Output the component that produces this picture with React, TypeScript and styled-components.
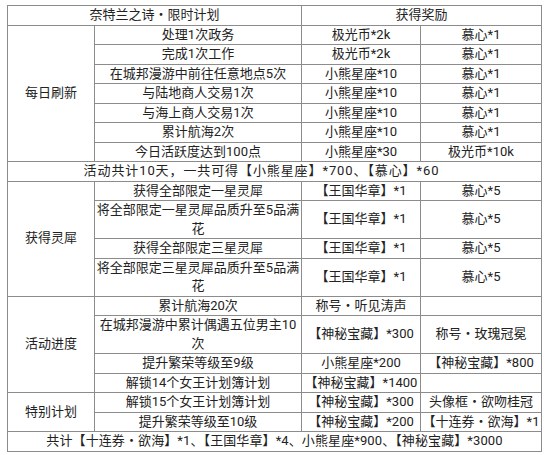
import React from "react";
import styled, { createGlobalStyle } from "styled-components";

const GlobalStyle = createGlobalStyle`
  body {
    margin: 0;
    background: #ffffff;
  }
`;

type Row = {
  task: React.ReactNode;
  a: string;
  b: string;
};

const daily: Row[] = [
  { task: "处理1次政务", a: "极光币*2k", b: "慕心*1" },
  { task: "完成1次工作", a: "极光币*2k", b: "慕心*1" },
  { task: "在城邦漫游中前往任意地点5次", a: "小熊星座*10", b: "慕心*1" },
  { task: "与陆地商人交易1次", a: "小熊星座*10", b: "慕心*1" },
  { task: "与海上商人交易1次", a: "小熊星座*10", b: "慕心*1" },
  { task: "累计航海2次", a: "小熊星座*10", b: "慕心*1" },
  { task: "今日活跃度达到100点", a: "小熊星座*30", b: "极光币*10k" },
];

const lingxi: Row[] = [
  { task: "获得全部限定一星灵犀", a: "【王国华章】*1", b: "慕心*5" },
  {
    task: (
      <>
        将全部限定一星灵犀品质升至5品满
        <br />花
      </>
    ),
    a: "【王国华章】*1",
    b: "慕心*5",
  },
  { task: "获得全部限定三星灵犀", a: "【王国华章】*1", b: "慕心*5" },
  {
    task: (
      <>
        将全部限定三星灵犀品质升至5品满
        <br />花
      </>
    ),
    a: "【王国华章】*1",
    b: "慕心*5",
  },
];

const progress: Row[] = [
  { task: "累计航海20次", a: "称号・听见涛声", b: "" },
  {
    task: (
      <>
        在城邦漫游中累计偶遇五位男主10
        <br />次
      </>
    ),
    a: "【神秘宝藏】*300",
    b: "称号・玫瑰冠冕",
  },
  { task: "提升繁荣等级至9级", a: "小熊星座*200", b: "【神秘宝藏】*800" },
  { task: "解锁14个女王计划簿计划", a: "【神秘宝藏】*1400", b: "" },
];

const special: Row[] = [
  { task: "解锁15个女王计划簿计划", a: "【神秘宝藏】*300", b: "头像框・欲吻桂冠" },
  { task: "提升繁荣等级至10级", a: "【神秘宝藏】*200", b: "【十连券・欲海】*1" },
];

const sections = [
  { name: "每日刷新", rows: daily },
  { name: "获得灵犀", rows: lingxi },
  { name: "活动进度", rows: progress },
  { name: "特别计划", rows: special },
];

export default function App() {
  return (
    <>
      <GlobalStyle />
      <Page>
        <Table>
          <colgroup>
            <col style={{ width: 87 }} />
            <col style={{ width: 207 }} />
            <col style={{ width: 119 }} />
            <col style={{ width: 121 }} />
          </colgroup>
          <tbody>
            <tr>
              <Cell colSpan={2}>奈特兰之诗・限时计划</Cell>
              <Cell colSpan={2}>获得奖励</Cell>
            </tr>
            {sections.map((sec, si) => (
              <React.Fragment key={sec.name}>
                {sec.rows.map((r, i) => (
                  <tr key={i}>
                    {i === 0 && <Cell rowSpan={sec.rows.length}>{sec.name}</Cell>}
                    <Cell>{r.task}</Cell>
                    <Cell>{r.a}</Cell>
                    <Cell>{r.b}</Cell>
                  </tr>
                ))}
                {si === 0 && (
                  <tr>
                    <Cell colSpan={4} $shift={26} $spacing={0.9}>
                      活动共计10天，一共可得【小熊星座】*700、【慕心】*60
                    </Cell>
                  </tr>
                )}
              </React.Fragment>
            ))}
            <tr>
              <Cell colSpan={4} $spacing={0.1}>
                共计【十连券・欲海】*1、【王国华章】*4、小熊星座*900、【神秘宝藏】*3000
              </Cell>
            </tr>
          </tbody>
        </Table>
      </Page>
    </>
  );
}

const Page = styled.div`
  padding: 5px 0 0 7px;
`;

const Table = styled.table`
  border-collapse: collapse;
  table-layout: fixed;
  width: 535px;
  font-family: Roboto, "Noto Sans CJK SC", "Noto Sans", sans-serif;
  font-size: 13px;
  color: #222222;
`;

const Cell = styled.td<{ $shift?: number; $spacing?: number }>`
  border: 1px solid #8c8c8c;
  padding: 0 ${({ $shift }) => ($shift ? `${$shift}px` : "0")} 0 0;
  line-height: 18.5px;
  height: 18.5px;
  text-align: center;
  vertical-align: middle;
  white-space: nowrap;
  letter-spacing: ${({ $spacing }) => ($spacing ? `${$spacing}px` : "0")};
`;
